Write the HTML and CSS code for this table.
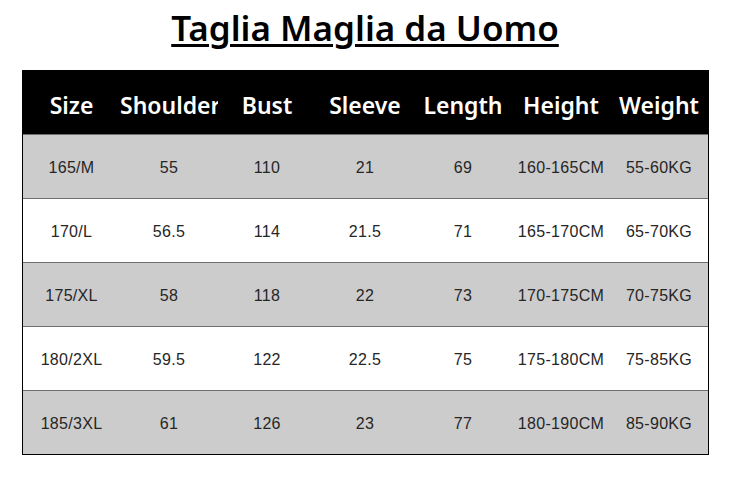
FILE: index.html
```html
<!DOCTYPE html>
<html>
<head>
<meta charset="utf-8">
<link rel="stylesheet" href="styles.css">
</head>
<body>
<h1 class="title">Taglia Maglia da Uomo</h1>
<div class="chart">
  <div class="row head">
    <div class="cell">Size</div><div class="cell">Shoulder</div><div class="cell">Bust</div><div class="cell">Sleeve</div><div class="cell">Length</div><div class="cell">Height</div><div class="cell">Weight</div>
  </div>
  <div class="row grey">
    <div class="cell">165/M</div><div class="cell">55</div><div class="cell">110</div><div class="cell">21</div><div class="cell">69</div><div class="cell">160-165CM</div><div class="cell">55-60KG</div>
  </div>
  <div class="row">
    <div class="cell">170/L</div><div class="cell">56.5</div><div class="cell">114</div><div class="cell">21.5</div><div class="cell">71</div><div class="cell">165-170CM</div><div class="cell">65-70KG</div>
  </div>
  <div class="row grey">
    <div class="cell">175/XL</div><div class="cell">58</div><div class="cell">118</div><div class="cell">22</div><div class="cell">73</div><div class="cell">170-175CM</div><div class="cell">70-75KG</div>
  </div>
  <div class="row">
    <div class="cell">180/2XL</div><div class="cell">59.5</div><div class="cell">122</div><div class="cell">22.5</div><div class="cell">75</div><div class="cell">175-180CM</div><div class="cell">75-85KG</div>
  </div>
  <div class="row grey">
    <div class="cell">185/3XL</div><div class="cell">61</div><div class="cell">126</div><div class="cell">23</div><div class="cell">77</div><div class="cell">180-190CM</div><div class="cell">85-90KG</div>
  </div>
</div>
</body>
</html>
```
FILE: styles.css
```css
html, body {
  margin: 0;
  padding: 0;
  background: #ffffff;
}
body {
  width: 730px;
  height: 478px;
  overflow: hidden;
}
.title {
  margin: 0;
  padding-top: 5px;
  height: 70px;
  box-sizing: border-box;
  text-align: center;
  font-family: "Noto Sans", "Open Sans", sans-serif;
  font-weight: 600;
  font-size: 35px;
  line-height: 46px;
  color: #000;
  text-decoration: underline;
  text-decoration-thickness: 3px;
  text-underline-offset: 3px;
}
.chart {
  margin-left: 22px;
  width: 687px;
  border-left: 1px solid #000;
  border-right: 1px solid #000;
  border-bottom: 1px solid #000;
  box-sizing: border-box;
}
.row {
  display: grid;
  grid-template-columns: 97px repeat(6, 98px);
  height: 64px;
  border-top: 1px solid #6e6e6e;
  box-sizing: border-box;
  background: #fff;
}
.row.grey {
  background: #cccccc;
}
.row.head {
  background: #000;
  border-top: none;
}
.cell {
  overflow: hidden;
  white-space: nowrap;
  text-align: center;
  align-self: center;
  padding-top: 3px;
  font-family: "Liberation Sans", Arial, sans-serif;
  font-size: 16px;
  letter-spacing: 0.3px;
  color: #262626;
}
.head .cell {
  font-family: "Noto Sans", "Open Sans", sans-serif;
  font-weight: 600;
  font-size: 23px;
  letter-spacing: 0;
  color: #fff;
  padding-top: 6px;
}
```
